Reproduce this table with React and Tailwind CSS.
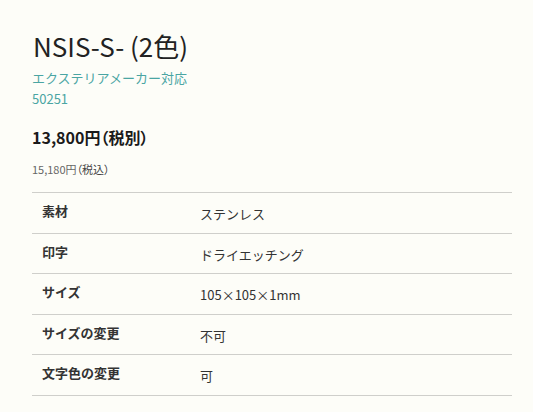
import React from 'react';

const specs = [
  { label: '素材', value: 'ステンレス' },
  { label: '印字', value: 'ドライエッチング' },
  { label: 'サイズ', value: '105×105×1mm' },
  { label: 'サイズの変更', value: '不可' },
  { label: '文字色の変更', value: '可' },
];

function SpecRow({ label, value }) {
  return (
    <div className="flex h-[40.5px] border-b border-[#cfcfcb]">
      <div className="w-[168px] pl-[10px] pt-[8px] text-[13px] font-bold leading-[20px] text-[#333]">
        {label}
      </div>
      <div className="pt-[11px] text-[13px] leading-[20px] text-[#333]">{value}</div>
    </div>
  );
}

export default function App() {
  return (
    <div
      className="min-h-[412px] w-[533px] bg-[#fdfdf8] pl-8 pr-[21px] pt-[28px] text-[#222]"
      style={{ fontFamily: '"Noto Sans CJK JP", sans-serif' }}
    >
      <h1 className="pl-px text-[26px] leading-[36px] font-normal text-[#222]">NSIS-S- (2色)</h1>
      <div className="mt-[3px] text-[13px] leading-[21px] text-[#4aa5a3]">
        <p>エクステリアメーカー対応</p>
        <p>50251</p>
      </div>
      <p className="mt-[16px] text-[16px] font-bold leading-[24px] text-[#1a1a1a] [font-feature-settings:'palt']">
        13,800円（税別）
      </p>
      <p className="mt-[12px] text-[11px] leading-[16px] text-[#666] [font-feature-settings:'palt']">
        15,180円<span className="text-[#444]">（税込）</span>
      </p>
      <div className="mt-[15px] border-t border-[#cfcfcb]">
        {specs.map((s) => (
          <SpecRow key={s.label} label={s.label} value={s.value} />
        ))}
      </div>
    </div>
  );
}
